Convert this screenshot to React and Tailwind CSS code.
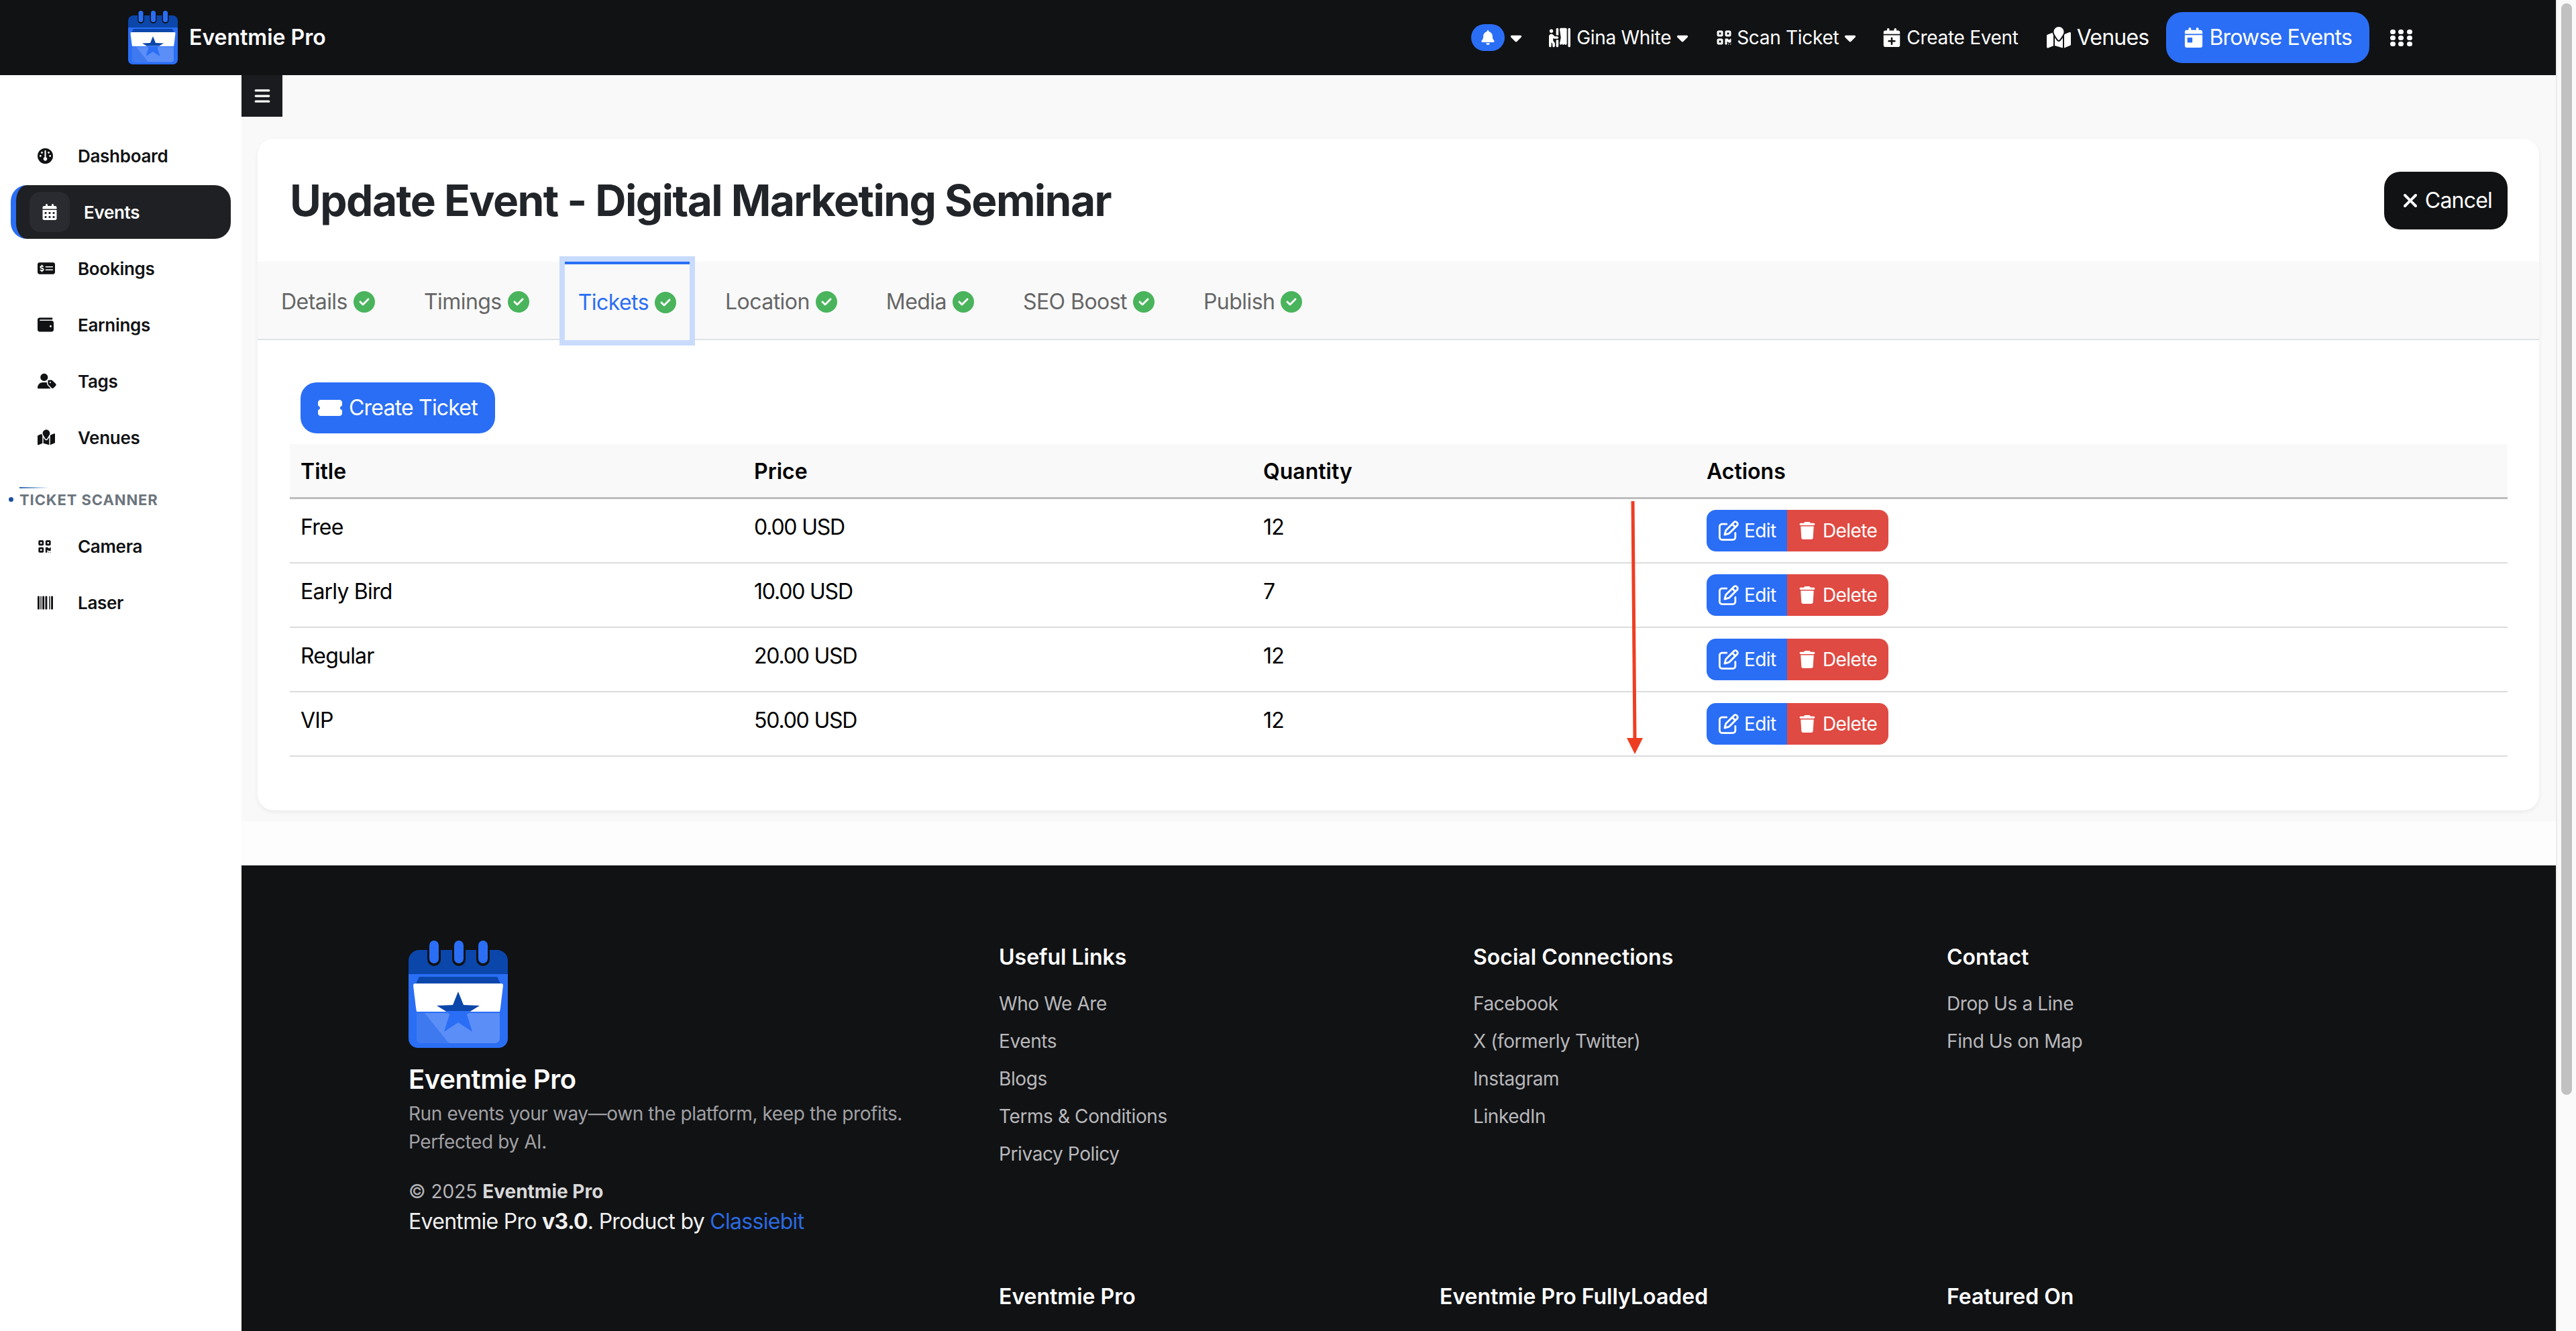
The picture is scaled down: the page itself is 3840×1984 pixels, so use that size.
import {
  FaBarcode,
  FaBars,
  FaBell,
  FaCalendarDay,
  FaCalendarDays,
  FaCalendarPlus,
  FaCaretDown,
  FaCircleCheck,
  FaGauge,
  FaMapLocation,
  FaMoneyCheckDollar,
  FaPersonBooth,
  FaQrcode,
  FaRegPenToSquare,
  FaTicketSimple,
  FaTrash,
  FaUserTag,
  FaWallet,
  FaXmark,
} from "react-icons/fa6";

const menu = [
  { label: "Dashboard", icon: FaGauge, size: "text-[23px]" },
  { label: "Events", icon: FaCalendarDays, size: "text-[24px]", active: true },
  { label: "Bookings", icon: FaMoneyCheckDollar, size: "text-[26px]" },
  { label: "Earnings", icon: FaWallet, size: "text-[24px]" },
  { label: "Tags", icon: FaUserTag, size: "text-[28px]" },
  { label: "Venues", icon: FaMapLocation, size: "text-[26px]" },
];

const scanner = [
  { label: "Camera", icon: FaQrcode, size: "text-[21px]" },
  { label: "Laser", icon: FaBarcode, size: "text-[23px]" },
];

const tabs = ["Details", "Timings", "Tickets", "Location", "Media", "SEO Boost", "Publish"];

const tickets = [
  { title: "Free", price: "0.00 USD", quantity: 12 },
  { title: "Early Bird", price: "10.00 USD", quantity: 7 },
  { title: "Regular", price: "20.00 USD", quantity: 12 },
  { title: "VIP", price: "50.00 USD", quantity: 12 },
];

const footerLinks = [
  { title: "Useful Links", links: ["Who We Are", "Events", "Blogs", "Terms & Conditions", "Privacy Policy"] },
  { title: "Social Connections", links: ["Facebook", "X (formerly Twitter)", "Instagram", "LinkedIn"] },
  { title: "Contact", links: ["Drop Us a Line", "Find Us on Map"] },
];

const QrMark = ({ x, y, fill }) => (
  <g fill="none" stroke={fill} strokeWidth="2.5">
    <path d={`M${x} ${y + 6}v-6h6M${x + 14} ${y}h6v6M${x} ${y + 16}v6h6M${x + 14} ${y + 22}h6v-6`} />
    <rect x={x + 5} y={y + 5} width="4" height="4" />
    <rect x={x + 11} y={y + 13} width="4" height="4" />
  </g>
);

// Calendar with ticket logo, drawn on a 148 x 160 box
const Logo = ({ className }) => (
  <svg viewBox="0 0 148 160" className={className}>
    <path d="M0 30a16 16 0 0 1 16-16h116a16 16 0 0 1 16 16v20H0z" fill="#0b46ab" />
    <path d="M0 50h148v96a14 14 0 0 1-14 14H14a14 14 0 0 1-14-14z" fill="#2a6ef5" />
    <path d="M16 54h116l5 10H11z" fill="#0b46ab" />
    <path d="M12 108h124v38a7 7 0 0 1-7 7H19a7 7 0 0 1-7-7z" fill="#5b8ef7" />
    <path d="M12 108h12l36 45H19a7 7 0 0 1-7-7z" fill="#3f79f0" />
    <path d="M10 64h128a3 3 0 0 1 3 3l-4 33-1 6H12l-1-6-4-33a3 3 0 0 1 3-3z" fill="#fff" />
    <path d="M74 76L82 96L106 97L93 105H55L42 97L66 96z" fill="#0b46ab" />
    <path d="M55 105H93L87 110L95 136L74 122L53 136L61 110z" fill="#2a6ef5" />
    <QrMark x="108" y="76" fill="#0b46ab" />
    <QrMark x="108" y="120" fill="#2a6ef5" />
    {[38, 75, 111].map((x) => (
      <rect key={x} x={x - 10} y="-4" width="20" height="42" rx="10" fill="#111214" />
    ))}
    {[38, 75, 111].map((x) => (
      <rect key={x} x={x - 7} y="0" width="14" height="34" rx="7" fill="#2a6ef5" />
    ))}
  </svg>
);

const GridDots = () => (
  <svg viewBox="0 0 33 25" className="w-[33px] h-[25px]" fill="#fff">
    {[0, 9, 18].map((y) =>
      [0, 12, 25].map((x) => <rect key={`${x}-${y}`} x={x} y={y} width="8" height="7" rx="3.5" />)
    )}
  </svg>
);

const SideItem = ({ item }) => {
  const Icon = item.icon;
  if (item.active) {
    return (
      <div className="flex items-center h-[80px] mb-1 ml-4 w-[328px] rounded-[24px] border-l-8 border-[#2a6ef5] bg-[#1f2023] pl-5 text-white">
        <span className="flex items-center justify-center w-[60px] h-[60px] rounded-[16px] bg-[#2a2b30]">
          <Icon className={item.size} />
        </span>
        <span className="ml-[21px] text-[26px] font-semibold tracking-[-0.3px]">{item.label}</span>
      </div>
    );
  }
  return (
    <div className="flex items-center h-[80px] mb-1 pl-14 text-[#111214]">
      <span className="w-[60px]">
        <Icon className={item.size} />
      </span>
      <span className="text-[26px] font-semibold tracking-[-0.3px]">{item.label}</span>
    </div>
  );
};

const App = () => {
  return (
    <div className="flex h-[1984px] w-[3840px] overflow-hidden bg-[#fafafa] font-['Inter',sans-serif]">
      <div className="w-[3810px] shrink-0">
        {/* Top bar */}
        <header className="flex items-center h-[112px] bg-[#111214] pl-[191px] pr-[214px] text-white">
          <Logo className="w-[74px] h-[80px]" />
          <span className="ml-[17px] text-[32px] font-semibold">Eventmie Pro</span>
          <nav className="ml-auto flex items-center text-[28px] font-normal tracking-[-0.3px]">
            <span className="flex items-center justify-center w-[50px] h-[40px] rounded-full bg-[#2a6ef5]">
              <FaBell className="text-[22px]" />
            </span>
            <FaCaretDown className="ml-1 text-[26px]" />
            <span className="ml-[36px] flex items-center gap-[9px]">
              <FaPersonBooth className="text-[32px]" />
              Gina White
            </span>
            <FaCaretDown className="ml-1 text-[26px]" />
            <span className="ml-[37px] flex items-center gap-[7px]">
              <FaQrcode className="text-[24px]" />
              Scan Ticket
            </span>
            <FaCaretDown className="ml-1 text-[26px]" />
            <span className="ml-[35px] flex items-center gap-[8px]">
              <FaCalendarPlus className="text-[28px]" />
              Create Event
            </span>
            <span className="ml-[42px] flex items-center gap-[9px] text-[32px] tracking-[-0.8px]">
              <FaMapLocation className="text-[36px]" />
              Venues
            </span>
            <span className="ml-[26px] flex items-center gap-[8px] h-[76px] px-[26px] rounded-[24px] bg-[#2a6ef5] text-[32px] tracking-[-0.8px]">
              <FaCalendarDay className="text-[30px]" />
              Browse Events
            </span>
            <span className="ml-[31px]">
              <GridDots />
            </span>
          </nav>
        </header>

        <div className="flex">
          {/* Sidebar */}
          <aside className="w-[360px] shrink-0 h-[1872px] bg-white pt-20">
            {menu.map((item) => (
              <SideItem key={item.label} item={item} />
            ))}
            <div className="relative h-[78px]">
              <div className="absolute left-[29px] top-[30px] w-[44px] h-[2px] bg-gradient-to-r from-[#2a6ab0] to-white" />
              <div className="absolute left-[13px] top-[45px] w-[7px] h-[7px] rounded-full bg-[#1e4f9f]" />
              <div className="absolute left-[29px] top-[35px] text-[22px] leading-[28px] font-bold tracking-[0.9px] text-[#6c757d]">
                TICKET SCANNER
              </div>
            </div>
            {scanner.map((item) => (
              <SideItem key={item.label} item={item} />
            ))}
          </aside>

          <main className="flex-1 min-w-0">
            <div className="bg-[#f9f9f9] pb-4">
              <button className="flex items-center justify-center w-[61px] h-[62px] bg-[#1a1b1f] text-white">
                <FaBars className="text-[26px]" />
              </button>

              {/* Event card */}
              <section className="relative mt-[33px] ml-6 mr-[25px] h-[1001px] rounded-[24px] bg-white shadow-[0_3px_6px_rgba(0,0,0,0.06)]">
                <div className="flex items-center justify-between h-[183px] pl-12 pr-[47px]">
                  <h1 className="text-[64px] font-bold tracking-[-1.55px] text-[#212529]">
                    Update Event - Digital Marketing Seminar
                  </h1>
                  <button className="flex items-center gap-[6px] h-[86px] px-[23px] rounded-[24px] bg-[#111214] text-[32px] tracking-[-0.8px] text-white">
                    <FaXmark className="text-[32px]" />
                    Cancel
                  </button>
                </div>

                <div className="flex items-stretch gap-[33px] h-[117px] pl-[15px] border-b-2 border-[#dee2e6] bg-[#f9f9f9] text-[32px] tracking-[-0.55px]">
                  {tabs.map((tab) =>
                    tab === "Tickets" ? (
                      <div
                        key={tab}
                        className="relative z-10 flex items-center gap-[9px] h-[117px] px-5 border-t-4 border-[#2a6ef5] bg-[#f9f9f9] text-[#2a6ef5] outline-8 outline-[#c9dbfd]"
                      >
                        {tab}
                        <FaCircleCheck className="text-[32px] text-[#4ab45c]" />
                      </div>
                    ) : (
                      <div key={tab} className="flex items-center gap-[9px] px-5 pt-1 text-[#666]">
                        {tab}
                        <FaCircleCheck className="text-[32px] text-[#4ab45c]" />
                      </div>
                    )
                  )}
                </div>

                <div className="px-12 pt-[63px]">
                  <button className="flex items-center gap-[10px] ml-4 h-[76px] px-[26px] rounded-[24px] bg-[#2a6ef5] text-[32px] tracking-[-0.8px] text-white">
                    <FaTicketSimple className="text-[36px]" />
                    Create Ticket
                  </button>

                  <table className="mt-4 w-[3306px] table-fixed text-left text-[32px] text-black">
                    <colgroup>
                      <col className="w-[676px]" />
                      <col className="w-[759px]" />
                      <col className="w-[661px]" />
                      <col />
                    </colgroup>
                    <thead className="bg-[#f9f9f9]">
                      <tr className="border-b-[3px] border-[#bdbdbd]">
                        <th className="h-[80px] px-4 pt-1 font-semibold">Title</th>
                        <th className="h-[80px] px-4 pt-1 font-semibold">Price</th>
                        <th className="h-[80px] px-4 pt-1 font-semibold">Quantity</th>
                        <th className="h-[80px] px-4 pt-1 font-semibold">Actions</th>
                      </tr>
                    </thead>
                    <tbody className="tracking-[-0.8px]">
                      {tickets.map((ticket) => (
                        <tr key={ticket.title} className="border-b-2 border-[#dcdcdc]">
                          <td className="px-4 pt-[18px] pb-4 align-top">{ticket.title}</td>
                          <td className="px-4 pt-[18px] pb-4 align-top tracking-[-1.2px]">{ticket.price}</td>
                          <td className="px-4 pt-[18px] pb-4 align-top">{ticket.quantity}</td>
                          <td className="p-4 align-top">
                            <div className="flex text-[28px] tracking-[-0.6px] text-white">
                              <span className="flex items-center gap-[8px] h-[62px] w-[120px] pl-[18px] rounded-l-[14px] bg-[#2a6ef5]">
                                <FaRegPenToSquare className="text-[30px]" />
                                Edit
                              </span>
                              <span className="flex items-center gap-[10px] h-[62px] w-[151px] pl-[17px] rounded-r-[14px] bg-[#df4a42]">
                                <FaTrash className="text-[26px]" />
                                Delete
                              </span>
                            </div>
                          </td>
                        </tr>
                      ))}
                    </tbody>
                  </table>
                </div>

                {/* Red annotation arrow over the table */}
                <svg className="absolute left-[2030px] top-[540px] w-[40px] h-[380px]" viewBox="0 0 40 380">
                  <path d="M20 0L23 355" stroke="#ee3e22" strokeWidth="5" fill="none" />
                  <path d="M11 353h24l-12 24z" fill="#ee3e22" />
                </svg>
              </section>
            </div>

            <div className="h-[66px] bg-[#fdfdfd]" />

            {/* Footer */}
            <footer className="flex h-[700px] bg-[#111214] pl-[249px] pt-[112px] text-white">
              <div className="w-[880px] shrink-0">
                <Logo className="w-[148px] h-[160px]" />
                <h3 className="mt-[17px] text-[40px] leading-[60px] font-semibold tracking-[-0.4px]">Eventmie Pro</h3>
                <p className="text-[28px] leading-[42px] tracking-[-0.4px] text-[#a0a0a4]">
                  Run events your way—own the platform, keep the profits.
                  <br />
                  Perfected by AI.
                </p>
                <p className="mt-8 text-[28px] leading-[42px] text-[#b4b4b8]">
                  © 2025 <b className="font-bold text-[#d8d8d8]">Eventmie Pro</b>
                </p>
                <p className="text-[32px] leading-[48px] tracking-[-0.7px] text-[#f0f0f0]">
                  Eventmie Pro <b className="font-bold">v3.0</b>. Product by{" "}
                  <span className="text-[#2a6ae0]">Classiebit</span>
                </p>
              </div>

              <div className="pt-px">
                <div className="grid grid-cols-[707px_706px_600px]">
                  {footerLinks.map((col) => (
                    <div key={col.title}>
                      <h4 className="text-[32px] leading-[48px] font-semibold">{col.title}</h4>
                      <ul className="mt-6">
                        {col.links.map((link) => (
                          <li key={link} className="mb-[14px] text-[28px] leading-[42px] tracking-[-0.4px] text-[#b8b8bb]">
                            {link}
                          </li>
                        ))}
                      </ul>
                    </div>
                  ))}
                </div>
                <div className="mt-[154px] grid grid-cols-[707px_706px_600px] text-[32px] leading-[48px] font-semibold">
                  <h4>Eventmie Pro</h4>
                  <h4 className="-ml-[50px]">Eventmie Pro FullyLoaded</h4>
                  <h4>Featured On</h4>
                </div>
              </div>
            </footer>
          </main>
        </div>
      </div>

      {/* Browser scrollbar */}
      <div className="w-[30px] shrink-0 border-l-2 border-[#ececec] bg-[#fafafa] pl-[6px]">
        <div className="mt-[5px] w-4 h-[1627px] rounded-full bg-[#c1c1c1]" />
      </div>
    </div>
  );
};

export default App;
